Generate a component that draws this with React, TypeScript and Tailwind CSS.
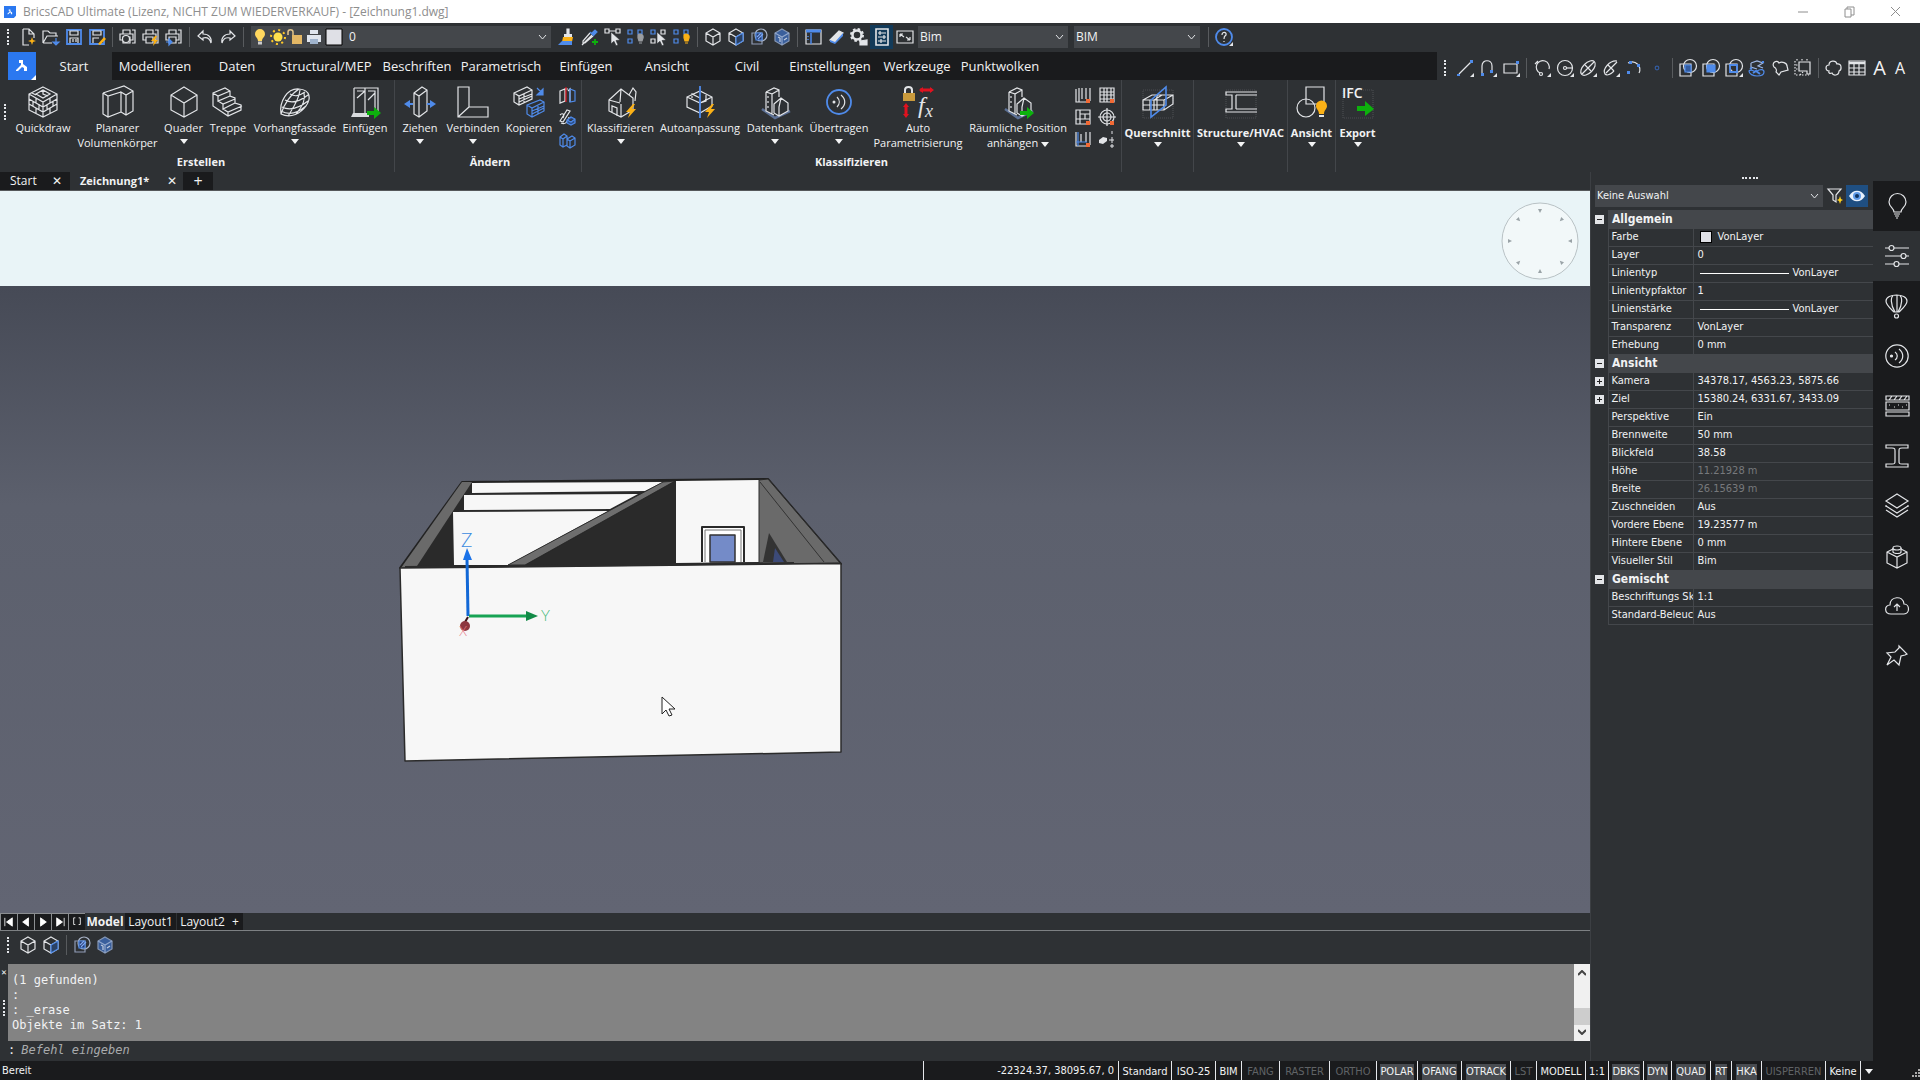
import type { ReactNode } from 'react'
import clsx from 'clsx'

const BLUE = '#4f8bea'
const ORANGE = '#fbb116'
const GREEN = '#0db10d'

/* ---------- icons ---------- */

function Icon({ size = 20, children }: { size?: number; children: ReactNode }) {
  return (
    <svg
      width={size}
      height={size}
      viewBox={`0 0 ${size} ${size}`}
      fill="none"
      stroke="#e3e5e8"
      strokeWidth="1.2"
      aria-hidden="true"
      className="shrink-0 overflow-visible"
    >
      {children}
    </svg>
  )
}

const bolt = <path d="M28 18l-7 8h4l-2 6 8-9h-4l3-5z" fill={ORANGE} stroke="none" />
const greenArrow = <path d="M18 25h7v-4l7 6-7 6v-4h-7z" fill={GREEN} stroke="none" />
const corner = <path d="M19 15v4h-4z" fill="#e3e5e8" stroke="none" />
const cube = <path d="M10 2l7 4v8l-7 4-7-4V6zM3 6l7 4 7-4M10 10v8" />
const printer = (
  <path d="M5 7V3h7v4M5 13H2V7h13v6h-3M5 10h7v6H5zM14 3h3v13h-3" />
)
const nodes = (
  <path d="M2 3h4v4H2zM12 3h4v4h-4zM2 12h4v4H2z" stroke={BLUE} />
)
const cursor = <path d="M8 5l9 8-4 .5 2 4.500-2 .8-2-4.500-3 2.500z" fill="#e3e5e8" stroke="#2e3134" strokeWidth=".6" />

const tools: Record<string, ReactNode> = {
  new: (
    <>
      <path d="M5 2h6l5 5v4M5 2v16h6M11 2v5h5" />
      <path d="M14 10l1 3 3 1-3 1-1 3-1-3-3-1 3-1z" fill={ORANGE} stroke="none" />
    </>
  ),
  open: (
    <>
      <path d="M2 16V4h5l2 2h6v3M2 16l4-7h11M2 16h9" />
      <path d="M15 11v5M12 15l3 3 3-3z" stroke={BLUE} fill={BLUE} />
    </>
  ),
  save: (
    <>
      <path d="M3 3h14v14H3z" stroke={BLUE} strokeWidth="1.800" />
      <path d="M6 4h8v4H6zM6 16v-5h8v5M9 12v3M12 12v3" />
    </>
  ),
  saveAs: (
    <>
      <path d="M3 3h14v14H3z" stroke={BLUE} strokeWidth="1.800" />
      <path d="M6 4h8v4H6zM6 16v-5h6" />
      <path d="M11 17l6-7 2 2-6 6z" fill={ORANGE} stroke="none" />
    </>
  ),
  preview: (
    <>
      {printer}
      <circle cx="8" cy="12" r="3.500" fill="#2e3134" />
    </>
  ),
  plot: (
    <>
      {printer}
      <path d="M14 9l-4 5h3l-1 5 5-6h-3l2-4z" fill={ORANGE} stroke="none" />
    </>
  ),
  publish: (
    <>
      {printer}
      <path d="M2 15h5M5 12l3 3-3 3z" stroke={BLUE} fill={BLUE} />
    </>
  ),
  undo: <path d="M8 4L3 9l5 4v-2c4-1 7 1 8 5 1-5-2-9-8-9z" />,
  redo: <path d="M12 4l5 5-5 4v-2c-4-1-7 1-8 5-1-5 2-9 8-9z" />,
  brush: (
    <>
      <path d="M10 2h2v6h-2z" fill="#e3e5e8" />
      <path d="M7 7h8v3H7z" fill="#e3e5e8" stroke="none" />
      <path d="M6 10h10l-1 5H5z" fill={ORANGE} stroke="none" />
      <path d="M1 18l4-4h10v4z" fill={BLUE} stroke="none" />
    </>
  ),
  dropper: (
    <>
      <path d="M12 8L4 16l-2 2M10 6l-7 8v2h2l8-7" />
      <path d="M10 5l4 4M12 6l3-3 2 2-3 3z" fill={BLUE} stroke={BLUE} />
      <path d="M15 12v6M12 15h6" stroke={GREEN} strokeWidth="1.800" />
    </>
  ),
  pick: (
    <>
      <path d="M2 2h4v4H2zM13 2h4v4h-4zM6 4h7" />
      {cursor}
    </>
  ),
  hide: (
    <>
      {nodes}
      <path d="M12 8a3 3 0 0 1 5 3l-1 3h-3l-1-3zM13 16h3" fill="#9a9da1" stroke="#9a9da1" />
    </>
  ),
  isolate: (
    <>
      <path d="M2 3h4v4H2z" stroke={BLUE} />
      <path d="M12 3h4v4h-4zM2 12h4v4H2z" />
      {cursor}
    </>
  ),
  show: (
    <>
      {nodes}
      <path d="M12 8a3 3 0 0 1 5 3l-1 3h-3l-1-3zM13 16h3" fill={ORANGE} stroke={ORANGE} />
    </>
  ),
  cube,
  cubeBlue: (
    <>
      {cube}
      <path d="M10 10l7-4v8l-7 4z" fill="#2b4265" stroke={BLUE} />
    </>
  ),
  xray: (
    <>
      <path d="M3 6h10v11H3z" stroke="#8f9cb5" />
      <circle cx="12" cy="8" r="6" stroke="#a9b3c6" />
      <path d="M7 6h6v7H7z" fill="#24386a" stroke={BLUE} />
      <path d="M8 10l4-4M9 12l5-5" stroke="#7ea6ee" />
    </>
  ),
  cubeSolid: (
    <>
      <path d="M10 2l7 4v8l-7 4-7-4V6z" fill="#3a5f9c" stroke="#8597b5" />
      <path d="M3 6l7 4 7-4M10 10v8" stroke="#93a8cc" />
      <path d="M6 10l2 1v4M12 13l3-2" stroke="#c2cde0" />
    </>
  ),
  panelLeft: (
    <>
      <path d="M3 3h15v14H3z" />
      <path d="M3 4h15" stroke={BLUE} strokeWidth="3" />
      <path d="M5 9v1M5 12v1M8 6v11" stroke={BLUE} strokeWidth="1.500" />
    </>
  ),
  eraser: (
    <>
      <path d="M4 13l9-9 4 2-8 9z" fill="#e3e5e8" />
      <path d="M4 13l5 2 8-9v3l-8 8-5-2z" fill={BLUE} stroke="none" />
    </>
  ),
  gear: (
    <>
      <circle cx="8" cy="8" r="4.500" strokeWidth="2.500" />
      <circle cx="8" cy="8" r="6" strokeWidth="2" strokeDasharray="2.500 2.200" />
      <path d="M11 14l7-1v5h-7z" fill="#e3e5e8" />
    </>
  ),
  settings: (
    <>
      <path d="M4 2h12v16H4z" strokeWidth="1.600" />
      <path d="M6 6h8M6 10h8M6 14h8M8 4v4M12 8v4M9 12v4" />
    </>
  ),
  expand: (
    <path d="M2 4h16v12H2zM5 7l4 3M5 7h3M5 7v3M15 13l-4-3M15 13h-3M15 13v-3" />
  ),
  help: (
    <>
      <circle cx="10" cy="10" r="8" stroke={BLUE} strokeWidth="1.800" />
      <path d="M8 8c0-4 5-3 4 0-1 1-2 1-2 4M10 14v1" />
      {corner}
    </>
  ),
  line: (
    <>
      <path d="M4 16L16 4" />
      <path d="M2 16h3v2H2zM15 2h3v3h-3z" fill={BLUE} stroke="none" />
      {corner}
    </>
  ),
  polyline: (
    <>
      <path d="M4 17V8c0-7 10-7 10 0v6" />
      <path d="M3 15h3v3H3zM12 12h3v3h-3z" fill={BLUE} stroke="none" />
      {corner}
    </>
  ),
  rect: (
    <>
      <path d="M3 6h13v9H3z" />
      <path d="M15 3h3v3h-3z" fill={BLUE} stroke="none" />
      {corner}
    </>
  ),
  arc: (
    <>
      <path d="M8 15A6.500 6.500 0 1 1 17 11M3 6l3-3" />
      <circle cx="9" cy="16" r="1.500" />
      {corner}
    </>
  ),
  circle: (
    <>
      <circle cx="10" cy="10" r="7.500" />
      <circle cx="10" cy="10" r="1.500" />
      <path d="M11 10h6" />
      {corner}
    </>
  ),
  ellipse: (
    <>
      <ellipse cx="10" cy="10" rx="9" ry="5" transform="rotate(-45 10 10)" />
      <path d="M7 7l6 6M4 16L16 4" />
      {corner}
    </>
  ),
  ellipseArc: (
    <>
      <path d="M16 3C9 2 1 11 4 16c2 2 6 0 9-3M5 15L16 4M7 7l6 6" />
      {corner}
    </>
  ),
  spline: (
    <>
      <path d="M4 5c8-4 14 4 11 10" />
      <path d="M5 3h3v3H5zM13 6h3v3h-3zM3 13h3v3H3z" fill={BLUE} stroke="none" />
    </>
  ),
  point: <circle cx="10" cy="10" r="1.800" stroke="#345c9f" />,
  hatch: (
    <>
      <path d="M2 6h11v12H2z" />
      <circle cx="12" cy="8" r="6.500" />
      <path d="M7 7h6v7H7z" fill="#345c9f" stroke={BLUE} />
    </>
  ),
  gradient: (
    <>
      <path d="M2 6h11v12H2z" />
      <circle cx="12" cy="8" r="6.500" />
      <path d="M6 7h8v7H6z" fill={BLUE} stroke={BLUE} />
    </>
  ),
  boundary: (
    <>
      <path d="M2 6h11v12H2z" />
      <circle cx="12" cy="8" r="6.500" />
      <path d="M6 7h7v7H6z" stroke={BLUE} strokeWidth="1.800" />
      {corner}
    </>
  ),
  region: (
    <>
      <path d="M4 5l6-2 6 2-5 3 5 2M4 5v4l6 2" stroke="#9db6e4" />
      <path d="M2 13c3-3 5 2 8 0s7-2 7 1-3 4-7 4-8-2-8-5z" stroke={BLUE} />
      <path d="M6 15l3-2 4 3M16 3v2M3 10l2 1" stroke={BLUE} strokeWidth="2" />
    </>
  ),
  wipeout: <path d="M4 9C1 5 7 1 9 5c3-2 8 0 8 3l1 4-7 2-2 3-3-3c1-2 0-4-2-5z" />,
  block: (
    <>
      <path d="M6 4h11v12h-3v-3H6z" />
      <path d="M2 3v14h14M3 7h2M3 11h2M7 17l3-3M4 1v3M9 1v2M14 1v2" strokeDasharray="1.500 1.500" />
    </>
  ),
  cloud: <path d="M5 13c-4 0-4-6 0-6 0-5 7-5 8-1 5-1 5 6 2 7 0 5-6 5-7 2-2 1-4 0-3-2z" />,
  table: (
    <>
      <path d="M2 3h16v14H2zM2 10h16M2 14h16M7 6v11M12 6v11" />
      <path d="M2 5h16" strokeWidth="2.500" />
    </>
  ),
}

const house = <path d="M4 14l12-11 12 9v12l-12 7-12-6zM16 3l-1 13M4 14l11 3M16 31V18M7 27v-7l5 2v8" />
const building = (
  <>
    <path d="M3 23l13 9 15-7" stroke="#5c7095" strokeWidth="2.500" />
    <path d="M7 6l8-4 5 2v7M7 6v19l8 4M7 6l6 2v20M13 8l7-4M9 10v2M9 15v2M9 20v2M15 18l7-6 7 5v8l-9 5-5-3zM22 12l-2 9v9" fill="#2e3134" />
  </>
)

const ribbonIcons: Record<string, ReactNode> = {
  quickdraw: (
    <path d="M16 1l14 7v16l-14 7-14-7V8zM2 8l14 8 14-8M16 16v15M9 8l7-4 7 4-7 4zM2 13l14 8 14-8M2 18l14 8 14-8M9 12v5M6 15v5M12 18v5M9 22v5M23 12v5M20 19v4M26 15v5M23 22v5M16 4v4l5 2M5 7l4 2" />
  ),
  planar: <path d="M1 7l5 3 13-4M1 7L22 0l9 5v20l-7 4-5-3V6l5 3 7-4M24 9v20M1 7v21l5 3 13-5M6 10v21" />,
  quader: <path d="M16 1l13 8v15l-13 7-13-7V9zM3 9l13 8 13-8M16 17v14" />,
  treppe: <path d="M1 7l12-5 5 3v5l5 2v5l6 2v5l-13 6L1 20zM1 7l5 3 12-5M6 10v5l12-5M6 15l5 3 12-5M11 18v5l12-6M11 23l5 3 14-6M16 26v4" />,
  dome: (
    <path d="M2 28C0 16 8 2 20 3s12 10 7 17-15 13-25 8zM2 28C5 18 12 8 20 3M9 30C14 22 20 14 21 4M17 28c6-7 10-14 8-21M3 21c8 4 17 1 26-6M6 14c7 4 14 2 23-5M11 8c5 3 9 2 15-2M2 25c9 5 18 1 25-5" />
  ),
  door: (
    <>
      <path d="M5 2h24v26M5 2v26M8 5h8v23M16 2v26M19 5h7v20M8 12l8-7M19 14l7-7" />
      <path d="M4 27h16v4H2z" fill="#d9dbde" stroke="none" />
      {greenArrow}
    </>
  ),
  ziehen: (
    <>
      <path d="M10 7l8-6 5 3v21l-8 6-5-3zM10 7l5 3 8-6M15 10v21" />
      <path d="M9 18H3M23 18h6" stroke={BLUE} strokeWidth="2" />
      <path d="M0 18l6-4v8zM32 18l-6-4v8z" fill={BLUE} stroke="none" />
    </>
  ),
  verbinden: <path d="M1 1h11v20h19v10H1zM1 31l11-10" />,
  kopieren: (
    <>
      <path d="M1 7l13-6 5 3v9L6 19l-5-3zM1 7l5 3 13-6M6 10v9M6 13l13-5M11 8v9M6 16l13-6" />
      <path d="M14 19l13-5 4 2v9l-12 6-5-3zM14 19l5 3 12-6M19 22v9M19 25l12-5M25 20v8M19 28l12-6" stroke={BLUE} />
      <path d="M24 2l6 6M30 3v6h-6z" stroke={BLUE} fill={BLUE} />
    </>
  ),
  klassifizieren: (
    <>
      {house}
      <path d="M24 9l4-7 3 4-1 9" />
      {bolt}
    </>
  ),
  anpassung: (
    <>
      <path d="M3 11l13-6 12 6v9l-12 7-13-6zM3 11l13 6 12-6M16 17v10M8 12V8l8 4M22 9v6l-6 2" />
      <path d="M16 0v32" stroke={BLUE} strokeWidth="1.800" />
      {bolt}
    </>
  ),
  datenbank: building,
  uebertragen: (
    <>
      <circle cx="16" cy="16" r="12" stroke={BLUE} strokeWidth="1.800" />
      <circle cx="11" cy="16" r="1.500" fill="#e3e5e8" stroke="none" />
      <path d="M14 11c3 3 3 7 0 10M18 9c5 4 5 10 0 14" />
    </>
  ),
  auto: (
    <>
      <path d="M3 8V4c0-4 7-4 7 0v4" strokeWidth="2" />
      <path d="M1 7h12v8H1z" fill="#c99a3c" stroke="none" />
      <path d="M4 20v9M18 4h12" stroke="#e0121f" strokeWidth="3" />
      <path d="M1 21l3-4 3 4zM1 28l3 4 3-4zM21 1l-4 3 4 3zM28 1l4 3-4 3z" fill="#e0121f" stroke="none" />
      <text x="16" y="27" fill="#e3e5e8" stroke="none" className="font-['Liberation_Serif'] text-[24px] italic">f</text>
      <text x="23" y="31" fill="#e3e5e8" stroke="none" className="font-['Liberation_Serif'] text-[18px] italic">x</text>
    </>
  ),
  position: (
    <>
      {building}
      {greenArrow}
    </>
  ),
  querschnitt: (
    <>
      <path d="M1 4h30v28H1z" stroke="#4a4d50" strokeDasharray="1 1" />
      <path d="M1 14l9-5h21v9l-9 6H1zM1 14h21v10M22 14l9-5M1 19h21M8 14v10M15 9v15M12 24V14l8-5" />
      <path d="M9 14L24 1v18L9 31z" stroke={BLUE} strokeWidth="1.600" />
    </>
  ),
  structure: (
    <>
      <path d="M1 4h30v28H1z" stroke="#4a4d50" strokeDasharray="1 1" />
      <path d="M32 6H1v3h6v14H1v3h31M11 9v14M11 9h21M11 23h21" />
    </>
  ),
  ansicht: (
    <>
      <path d="M10 1h18v17H10z" />
      <circle cx="10" cy="22" r="9" />
      <path d="M20 20a5.500 5.500 0 1 1 11 0c0 3-3 4-3 8h-5c0-4-3-5-3-8z" fill={ORANGE} stroke="none" />
      <path d="M23 30h5" strokeWidth="2" />
    </>
  ),
  export: (
    <>
      <path d="M1 4h30v28H1z" stroke="#4a4d50" strokeDasharray="1 1" />
      <text x="0" y="12" fill="#f1f2f3" stroke="none" className="font-['Open_Sans'] text-[14px] font-semibold">IFC</text>
      <path d="M15 20h8v-5l9 8-9 7v-5h-8z" fill={GREEN} stroke="none" />
    </>
  ),
}

const orangeDot = <path d="M12 13h4v4h-4z" fill="#f26a35" stroke="none" />
const smallIcons: Record<string, ReactNode> = {
  split: (
    <>
      <path d="M2 5l5-2v12l-5 2zM7 3h3M10 5l2-2v13" />
      <path d="M8 1v15" stroke="#e0121f" />
      <path d="M12 3l5 2v10l-5 1z" stroke={BLUE} />
    </>
  ),
  sketch: (
    <>
      <path d="M2 13L9 2l3 1-7 11zM2 7c3-3 5 0 3 3M3 15c4 2 7-1 8-6" />
      <path d="M9 12l4-3 4 2v4l-4 2-4-2zM9 12l4 2 4-3" stroke={BLUE} fill="#2b4f8c" />
    </>
  ),
  boxes: <path d="M2 7l4-3 3 2v9l-4 2-3-2zM2 7l3 2v8M5 9l4-3M9 9l5-3 3 2v7l-5 3-3-2zM9 9l3 2v7M12 11l5-3" stroke={BLUE} />,
  column: (
    <>
      <path d="M2 3v13h12M5 2v14M8 2v11M12 2v11M16 2v13" />
      {orangeDot}
    </>
  ),
  grid: (
    <>
      <path d="M2 2h14v14H2zM2 6h14M2 9h14M2 13h14M6 2v14M9 2v14M13 2v14" />
      {orangeDot}
    </>
  ),
  plan: (
    <>
      <path d="M2 2h14v14H2zM6 2v14M6 6h10M11 6v5H2M11 11h5" />
      {orangeDot}
    </>
  ),
  wheel: (
    <>
      <circle cx="9" cy="9" r="7" />
      <circle cx="9" cy="9" r="4" />
      <path d="M9 0v18M0 9h18" />
      {orangeDot}
    </>
  ),
  axes: (
    <>
      <path d="M2 2v14h12M7 4v8M12 2v10M16 2v13" />
      <path d="M2 12h11M4 2v14" stroke={BLUE} />
      {orangeDot}
    </>
  ),
  part: (
    <>
      <path d="M1 10l4-3 4 1v3l-4 3-4-1z" fill="#e3e5e8" stroke="none" />
      <path d="M11 10h5M14 7v6M14 1v3M13 15h2v2h-2z" strokeWidth="1" />
    </>
  ),
}

const sidebarIcons: { name: string; icon: ReactNode }[] = [
  { name: 'Tipps', icon: <path d="M9 18c0-4-5-5-5-10a8.500 8.500 0 0 1 17 0c0 5-5 6-5 10zM9 20h6M10 22h4M11 24h2" /> },
  {
    name: 'Eigenschaften',
    icon: (
      <>
        <path d="M0 4h4M9 4h15M0 12h16M21 12h3M0 20h9M14 20h10" />
        <circle cx="6.500" cy="4" r="2.500" />
        <circle cx="18.500" cy="12" r="2.500" />
        <circle cx="11.500" cy="20" r="2.500" />
      </>
    ),
  },
  {
    name: 'Inhalt',
    icon: (
      <>
        <path d="M9 18C5 14 1 11 1 7c0-8 21-8 21 0 0 4-4 7-8 11zM10 18C5 10 6 3 8 2M13 18c5-8 4-15 2-16M12 18V1" />
        <circle cx="11.500" cy="22" r="2" />
      </>
    ),
  },
  {
    name: 'Übertragen',
    icon: (
      <>
        <circle cx="12" cy="12" r="11.200" />
        <circle cx="6.500" cy="12" r="1" fill="#e3e5e8" />
        <path d="M10 8c3 2 3 6 0 8M14 5c5 4 5 10 0 14" />
      </>
    ),
  },
  {
    name: 'Aufbauten',
    icon: <path d="M1 2h23v4H1zM1 8h23v8H1zM1 18h23v4H1zM4 6l3-4M9 6l3-4M14 6l3-4M19 6l3-4M4 11h1M9 13h1M13 11h1M17 13h1M21 11h1" />,
  },
  { name: 'Profile', icon: <path d="M1 1h22v3h-6c-3 0-3 1-3 3v10c0 2 0 3 3 3h6v3H1v-3h6c3 0 3-1 3-3V7c0-2 0-3-3-3H1z" /> },
  { name: 'Layer', icon: <path d="M12 0l11 7-11 7L1 7zM1 12l11 7 11-7M1 16l11 7 11-7M1 11v2M23 11v2" /> },
  {
    name: 'Komponenten',
    icon: (
      <>
        <path d="M12 3l10 5v11l-10 5-10-5V8zM2 8l10 5 10-5M12 13v11" />
        <path d="M8 4v4c1 2 8 2 8 0V4" fill="#1a1b1d" />
        <ellipse cx="12" cy="4" rx="4" ry="2" fill="#1a1b1d" />
      </>
    ),
  },
  { name: 'Cloud', icon: <path d="M6 20c-7 0-7-9-1-9 0-9 13-10 14-1 6 0 6 10 0 10zM12 17v-7M9 13l3-3 3 3" /> },
  { name: 'Anheften', icon: <path d="M14 2l8 8-2 1-4 1-2 9-5-5-7 5 4-8-4-4 8-1 4-4z" /> },
]

function Chevron() {
  return (
    <svg width="9" height="6" viewBox="0 0 9 6" fill="none" stroke="#e3e5e8" aria-hidden="true" className="pointer-events-none -ml-4 mr-1 shrink-0">
      <path d="M1 1l3.500 4L8 1" />
    </svg>
  )
}

function Caret({ className }: { className?: string }) {
  return (
    <svg width="8" height="5" viewBox="0 0 8 5" aria-hidden="true" className={clsx('inline-block', className)}>
      <path d="M0 0h8L4 5z" fill="#f3f4f5" />
    </svg>
  )
}

function Logo({ className }: { className: string }) {
  return (
    <svg viewBox="0 0 28 28" aria-hidden="true" className={className}>
      <path d="M0 0h28v28H0z" fill="#2b78f0" />
      <path d="M11 8h4v4l4 3v4h-3v-3l-2-1-4 4H8v-1l5-5v-2h-2z" fill="#fff" />
      <path d="M28 23v5h-5z" fill="#fff" />
    </svg>
  )
}

/* ---------- toolbar parts ---------- */

function Grip() {
  return (
    <div className="flex w-4 shrink-0 justify-center">
      <div className="h-4 border-l-2 border-dotted border-gray-200" />
    </div>
  )
}

function Separator() {
  return (
    <div className="flex w-2 shrink-0 justify-center">
      <div className="h-5 w-px bg-[#585b5e]" />
    </div>
  )
}

function Tools({ names, active }: { names: string[]; active?: string }) {
  return names.map(name => (
    <button
      key={name}
      type="button"
      aria-label={name}
      className={clsx('flex h-6 w-[23px] shrink-0 items-center justify-center', name === active && 'bg-[#123a59]')}
    >
      <Icon>{tools[name]}</Icon>
    </button>
  ))
}

function Select({ label, value, className }: { label: string; value: string; className: string }) {
  return (
    <div className={clsx('flex h-[22px] items-center bg-[#44474b]', className)}>
      <select aria-label={label} defaultValue={value} className="h-full min-w-0 flex-1 appearance-none bg-transparent px-0.5 outline-none">
        <option>{value}</option>
      </select>
      <Chevron />
    </div>
  )
}

function QuickToolbar() {
  return (
    <div className="flex h-[29px] items-center pb-px text-xs">
      <Grip />
      <Tools names={['new', 'open', 'save', 'saveAs']} />
      <Separator />
      <Tools names={['preview', 'plot', 'publish']} />
      <Separator />
      <Tools names={['undo', 'redo']} />
      <Separator />
      <div className="mx-1 flex h-[22px] w-[300px] items-center bg-[#44474b]">
        <svg width="92" height="20" viewBox="0 0 92 20" fill="none" aria-hidden="true" className="shrink-0">
          <path d="M4 7a5 5 0 1 1 10 0c0 3-3 4-3 7H7c0-3-3-4-3-7z" fill="#ffd75e" />
          <path d="M7 16h4" stroke="#ccc" strokeWidth="3" />
          <circle cx="27" cy="10" r="4.500" fill="#ffe14d" />
          <circle cx="27" cy="10" r="7" stroke="#ffc928" strokeWidth="2" strokeDasharray="2 3.500" />
          <path d="M37 8V5c0-3 5-3 5 0v4" stroke="#e3c58a" strokeWidth="1.500" />
          <path d="M41 8h10v9H41z" fill="#e3b765" />
          <path d="M56 8h14v7H56zM59 3h8v4h-8z" fill="#dfe5ee" />
          <path d="M59 12h8v5h-8z" fill="#9fb3cd" />
          <path d="M75 2h16v16H75z" fill="#dfe0e6" stroke="#000" />
        </svg>
        <select aria-label="Layer" defaultValue="0" className="h-full min-w-0 flex-1 appearance-none bg-transparent px-1.5 outline-none">
          <option>0</option>
        </select>
        <Chevron />
      </div>
      <Tools names={['brush', 'dropper', 'pick', 'hide', 'isolate', 'show']} />
      <Separator />
      <Tools names={['cube', 'cubeBlue', 'xray', 'cubeSolid']} />
      <Separator />
      <Tools names={['panelLeft', 'eraser', 'gear', 'settings', 'expand']} active="settings" />
      <Select label="Visueller Stil" value="Bim" className="ml-0.5 w-[150px]" />
      <Select label="Arbeitsbereich" value="BIM" className="mr-1 ml-1.5 w-[126px]" />
      <Separator />
      <Tools names={['help']} />
    </div>
  )
}

const tabs = [
  { label: 'Start', width: 'w-[76px]' },
  { label: 'Modellieren', width: 'w-[86px]' },
  { label: 'Daten', width: 'w-[78px]' },
  { label: 'Structural/MEP', width: 'w-[100px]' },
  { label: 'Beschriften', width: 'w-[82px]' },
  { label: 'Parametrisch', width: 'w-[86px]' },
  { label: 'Einfügen', width: 'w-[84px]' },
  { label: 'Ansicht', width: 'w-[78px]' },
  { label: 'Civil', width: 'w-[82px]' },
  { label: 'Einstellungen', width: 'w-[84px]' },
  { label: 'Werkzeuge', width: 'w-[90px]' },
  { label: 'Punktwolken', width: 'w-[76px]' },
]

function TabRow() {
  return (
    <div className="flex h-7 items-stretch">
      <button type="button" aria-label="BricsCAD" className="ml-2 w-7">
        <Logo className="size-7" />
      </button>
      <div className="flex flex-1 bg-[#1a1b1d]">
        {tabs.map((tab, i) => (
          <button
            key={tab.label}
            type="button"
            className={clsx(
              'flex shrink-0 items-center justify-center pt-0.5 text-[13px] whitespace-nowrap',
              tab.width,
              i === 0 && 'bg-[#2e3134]',
            )}
          >
            {tab.label}
          </button>
        ))}
      </div>
      <div className="flex w-[483px] items-center pt-1">
        <Grip />
        <Tools names={['line', 'polyline', 'rect']} />
        <Separator />
        <Tools names={['arc', 'circle', 'ellipse', 'ellipseArc', 'spline', 'point']} />
        <Separator />
        <Tools names={['hatch', 'gradient', 'boundary', 'region', 'wipeout', 'block']} />
        <Separator />
        <Tools names={['cloud', 'table']} />
        <button type="button" className="w-[23px] text-xl leading-6">A</button>
        <button type="button" className="w-[18px] text-base leading-5">A</button>
      </div>
    </div>
  )
}

type RibbonItem = { icon: string; lines: string[]; width: string; caret?: boolean; inlineCaret?: boolean }

const createItems: RibbonItem[] = [
  { icon: 'quickdraw', lines: ['Quickdraw'], width: 'w-[62px]' },
  { icon: 'planar', lines: ['Planarer', 'Volumenkörper'], width: 'w-[87px]' },
  { icon: 'quader', lines: ['Quader'], width: 'w-[45px]', caret: true },
  { icon: 'treppe', lines: ['Treppe'], width: 'w-11' },
  { icon: 'dome', lines: ['Vorhangfassade'], width: 'w-[90px]', caret: true },
  { icon: 'door', lines: ['Einfügen'], width: 'w-[50px]' },
]

const modifyItems: RibbonItem[] = [
  { icon: 'ziehen', lines: ['Ziehen'], width: 'w-[42px]', caret: true },
  { icon: 'verbinden', lines: ['Verbinden'], width: 'w-16', caret: true },
  { icon: 'kopieren', lines: ['Kopieren'], width: 'w-12' },
]

const classifyItems: RibbonItem[] = [
  { icon: 'klassifizieren', lines: ['Klassifizieren'], width: 'w-[77px]', caret: true },
  { icon: 'anpassung', lines: ['Autoanpassung'], width: 'w-[82px]' },
  { icon: 'datenbank', lines: ['Datenbank'], width: 'w-[68px]', caret: true },
  { icon: 'uebertragen', lines: ['Übertragen'], width: 'w-[60px]', caret: true },
  { icon: 'auto', lines: ['Auto', 'Parametrisierung'], width: 'w-[98px]' },
  { icon: 'position', lines: ['Räumliche Position', 'anhängen'], width: 'w-[102px]', inlineCaret: true },
]

const collapsedPanels = [
  { icon: 'querschnitt', label: 'Querschnitt', width: 'w-[71px]' },
  { icon: 'structure', label: 'Structure/HVAC', width: 'w-[93px]' },
  { icon: 'ansicht', label: 'Ansicht', width: 'w-[47px]' },
  { icon: 'export', label: 'Export', width: 'w-[43px]' },
]

function RibbonPanel({ title, items, small, className }: { title: string; items: RibbonItem[]; small?: string[]; className?: string }) {
  return (
    <section className={clsx('flex flex-col border-r border-[#43464a]', className)}>
      <div className="flex h-[74px] items-start pt-1.5">
        {items.map(item => (
          <button key={item.icon} type="button" className={clsx('flex flex-col items-center text-[11px] leading-[15px] whitespace-nowrap', item.width)}>
            <Icon size={32}>{ribbonIcons[item.icon]}</Icon>
            <span className="mt-0.5">{item.lines[0]}</span>
            {item.lines[1] && (
              <span>
                {item.lines[1]} {item.inlineCaret && <Caret />}
              </span>
            )}
            {item.caret && <Caret className="mt-1" />}
          </button>
        ))}
        {small && (
          <div className={clsx('-mt-0.5 grid auto-rows-[22px] px-0.5', small.length > 3 && 'grid-cols-2')}>
            {small.map(name => (
              <button key={name} type="button" aria-label={name} className="flex w-6 items-center justify-center">
                <Icon size={18}>{smallIcons[name]}</Icon>
              </button>
            ))}
          </div>
        )}
      </div>
      <h2 className="text-center text-[11px] leading-4 font-bold">{title}</h2>
    </section>
  )
}

function Ribbon() {
  return (
    <div className="flex h-[92px]">
      <div className="mt-6 w-3 pl-1">
        <div className="h-4 border-l-2 border-dotted border-gray-200" />
      </div>
      <RibbonPanel title="Erstellen" items={createItems} className="pr-1" />
      <RibbonPanel title="Ändern" items={modifyItems} small={['split', 'sketch', 'boxes']} className="pl-1" />
      <RibbonPanel
        title="Klassifizieren"
        items={classifyItems}
        small={['column', 'grid', 'plan', 'wheel', 'axes', 'part']}
      />
      {collapsedPanels.map(panel => (
        <section key={panel.icon} className="border-r border-[#43464a] last:border-0">
          <button
            type="button"
            className={clsx('flex flex-col items-center pt-1.5 text-[11px] leading-[15px] font-bold whitespace-nowrap', panel.width)}
          >
            <Icon size={32}>{ribbonIcons[panel.icon]}</Icon>
            <span className="mt-[7px]">{panel.label}</span>
            <Caret className="mt-0.5" />
          </button>
        </section>
      ))}
    </div>
  )
}

/* ---------- drawing area ---------- */

function DocumentTabs() {
  return (
    <div className="flex h-[19px] items-center border-b border-[#55585b] text-xs">
      <div className="flex h-full w-[70px] items-center justify-between bg-[#1a1b1d] pr-2 pl-2.5">
        <button type="button">Start</button>
        <button type="button" aria-label="Start schließen">✕</button>
      </div>
      <div className="flex h-full w-[113px] items-center justify-between pr-1.5 pl-2.5">
        <button type="button" className="text-[11px] font-bold">Zeichnung1*</button>
        <button type="button" aria-label="Zeichnung1 schließen">✕</button>
      </div>
      <button type="button" className="h-full w-[30px] bg-[#1a1b1d] text-base leading-4">+</button>
    </div>
  )
}

function Model() {
  return (
    <svg aria-hidden="true" className="absolute inset-0 size-full" strokeLinejoin="round">
      <g transform="translate(0 -191)">
        <path d="M462 482l306-3 73 85-441 4z" fill="#2a2a2a" stroke="#222" strokeWidth="2" />
        <path d="M462 482h10l-55 84-16 2z" fill="#6a6a6a" />
        <path d="M472 483l191-1-18 9-173 2zM464 495l174-1-28 15-146 1zM453 512l155-1-100 54h-54z" fill="#f7f7f7" />
        <path d="M663 482l12-1-150 84h-17z" fill="#6e6e6e" stroke="#222" strokeWidth=".8" />
        <path d="M676 481l83-1v82l-83 1z" fill="#f7f7f7" />
        <path d="M702 562v-35h42v35" fill="#fff" stroke="#2a2a2a" strokeWidth="2" />
        <path d="M705 562v-32h36v32" fill="none" stroke="#777" strokeWidth="1" />
        <path d="M710 562v-27h25v27z" fill="#748bc8" stroke="#333" strokeWidth="1.500" />
        <path d="M759 480l9-1 72 84-81 1z" fill="#6a6a6a" stroke="#2a2a2a" strokeWidth="1" />
        <path d="M760 482l64 80" stroke="#333" strokeWidth="1" />
        <path d="M769 533l18 29h-24z" fill="#333" />
        <path d="M775 548l9 14h-11z" fill="#3c4a78" />
        <path d="M400 568l441-4.500V752l-436 9z" fill="#f7f7f7" stroke="#2b2b2b" strokeWidth="1.500" />
        <path d="M405 567l225-2 164-2" stroke="#2b2b2b" strokeWidth="2" />

        <path d="M468 616l-1-57" stroke="#1268d6" strokeWidth="3" />
        <path d="M467 548l5 12h-9z" fill="#1a72e8" />
        <path d="M469 616h58" stroke="#17a354" strokeWidth="3" />
        <path d="M526 611l12 5-12 5z" fill="#118a46" />
        <path d="M468 617l-3 5" stroke="#3a1216" strokeWidth="2" />
        <circle cx="465" cy="626" r="5" fill="#8d3840" />
        <text x="461" y="547" fill="#3b8ae0" className="font-['Lato'] text-[19px] font-light">Z</text>
        <text x="541" y="621" fill="#3fb878" className="font-['Lato'] text-[15px] font-light">Y</text>
        <text x="459" y="636" fill="#e8808a" className="font-['Lato'] text-[13px] font-light">X</text>
        <path d="M662 697v17l4-4 3 6 3-1-3-6h6z" fill="#fff" stroke="#222" />
      </g>
    </svg>
  )
}

function Compass() {
  return (
    <svg width="78" height="78" viewBox="-39 -39 78 78" aria-hidden="true" className="absolute top-[11px] right-[11px]">
      <circle r="38" fill="#f2f8f9" stroke="#b9c2c5" />
      {[0, 45, 90, 135, 180, 225, 270, 315].map(angle => (
        <path key={angle} d="M-2-32h4l-2 4z" fill="#9aa3a7" transform={`rotate(${angle})`} />
      ))}
    </svg>
  )
}

function Viewport() {
  return (
    <div className="relative flex min-h-0 flex-1 flex-col">
      <div className="h-[95px] bg-[#e9f4f7]" />
      <div className="flex-1 bg-linear-to-b from-[#464a56] via-[#5c606d] via-35% to-[#626573]" />
      <Model />
      <Compass />
    </div>
  )
}

const navPaths = ['M1 1v10M10 1v10L3 6z', 'M9 1v10L2 6z', 'M3 1v10l7-5z', 'M2 1v10l7-5zM11 1v10', 'M4 1H2v8h2M8 1h2v8H8']

function LayoutTabs() {
  return (
    <div className="flex h-[18px] items-stretch border-b border-[#7d8083] text-xs">
      {navPaths.map((d, i) => (
        <button key={d} type="button" aria-label={`Layout ${i + 1}`} className="flex w-[17px] items-center justify-center border-t border-l border-[#8b8e91] bg-[#1a1b1d]">
          <svg width="10" height="10" viewBox="0 0 12 12" fill={i === 4 ? 'none' : '#fff'} stroke="#fff" aria-hidden="true">
            <path d={d} />
          </svg>
        </button>
      ))}
      <button type="button" className="w-10 font-bold">Model</button>
      <button type="button" className="w-[51px] bg-[#1a1b1d]">Layout1</button>
      <button type="button" className="ml-px w-[51px] bg-[#1a1b1d]">Layout2</button>
      <button type="button" className="w-[15px] bg-[#1a1b1d]">+</button>
    </div>
  )
}

function CommandLine() {
  return (
    <div className="mt-1 font-['DejaVu_Sans_Mono',monospace] text-xs">
      <div className="flex h-[77px]">
        <div className="flex w-2 flex-col items-center gap-5">
          <button type="button" aria-label="Schließen" className="text-[9px] leading-4">✕</button>
          <div className="h-4 border-l-2 border-dotted border-gray-200" />
        </div>
        <pre className="flex-1 bg-[#838383] px-1 pt-[9px] font-[inherit] leading-[15px]">
          {'(1 gefunden)\n:\n: _erase\nObjekte im Satz: 1'}
        </pre>
        <div className="flex w-4 flex-col items-center justify-between bg-[#f0f0f0] py-1.5">
          <svg width="8" height="6" viewBox="0 0 8 6" fill="none" stroke="#444" strokeWidth="2" aria-hidden="true">
            <path d="M0 5l4-4 4 4" />
          </svg>
          <div className="mt-7 h-[17px] w-4 bg-[#cdcdcd]" />
          <svg width="8" height="6" viewBox="0 0 8 6" fill="none" stroke="#444" strokeWidth="2" aria-hidden="true">
            <path d="M0 1l4 4 4-4" />
          </svg>
        </div>
      </div>
      <label className="flex h-5 items-center gap-1.5 pb-0.5 pl-2">
        :
        <input type="text" aria-label="Befehl" placeholder="Befehl eingeben" className="flex-1 bg-transparent italic outline-none placeholder:text-[#a9abad]" />
      </label>
    </div>
  )
}

/* ---------- properties ---------- */

type Row = { label: string; value: string; kind?: 'swatch' | 'line' | 'disabled' | 'expand' }

const groups: { title: string; rows: Row[] }[] = [
  {
    title: 'Allgemein',
    rows: [
      { label: 'Farbe', value: 'VonLayer', kind: 'swatch' },
      { label: 'Layer', value: '0' },
      { label: 'Linientyp', value: 'VonLayer', kind: 'line' },
      { label: 'Linientypfaktor', value: '1' },
      { label: 'Linienstärke', value: 'VonLayer', kind: 'line' },
      { label: 'Transparenz', value: 'VonLayer' },
      { label: 'Erhebung', value: '0 mm' },
    ],
  },
  {
    title: 'Ansicht',
    rows: [
      { label: 'Kamera', value: '34378.17, 4563.23, 5875.66', kind: 'expand' },
      { label: 'Ziel', value: '15380.24, 6331.67, 3433.09', kind: 'expand' },
      { label: 'Perspektive', value: 'Ein' },
      { label: 'Brennweite', value: '50 mm' },
      { label: 'Blickfeld', value: '38.58' },
      { label: 'Höhe', value: '11.21928 m', kind: 'disabled' },
      { label: 'Breite', value: '26.15639 m', kind: 'disabled' },
      { label: 'Zuschneiden', value: 'Aus' },
      { label: 'Vordere Ebene', value: '19.23577 m' },
      { label: 'Hintere Ebene', value: '0 mm' },
      { label: 'Visueller Stil', value: 'Bim' },
    ],
  },
  {
    title: 'Gemischt',
    rows: [
      { label: 'Beschriftungs Sk', value: '1:1' },
      { label: 'Standard-Beleuc', value: 'Aus' },
    ],
  },
]

function Toggle({ open, label }: { open: boolean; label: string }) {
  return (
    <button type="button" aria-label={label} className="block size-[9px] bg-[#e3e5e8]">
      <svg viewBox="0 0 9 9" stroke="#222" aria-hidden="true">
        <path d={open ? 'M2 4.500h5' : 'M2 4.500h5M4.500 2v5'} />
      </svg>
    </button>
  )
}

function PropertiesPanel() {
  return (
    <aside className="w-[283px] shrink-0 border-l border-[#3c3f43] font-['DejaVu_Sans_Condensed','DejaVu_Sans',sans-serif] text-[11px]">
      <div className="flex h-3 items-center justify-center pl-9">
        <div className="w-4 border-t-2 border-dotted border-gray-200" />
      </div>
      <div className="flex h-6 items-center pl-1">
        <Select label="Auswahl" value="Keine Auswahl" className="w-[228px]" />
        <button type="button" aria-label="Schnellauswahl" className="flex w-[23px] justify-center">
          <Icon size={18}>
            <path d="M2 2h13l-5 6v7l-3-2V8z" />
            <path d="M14 9l1 3 2 1-2 1-1 3-1-3-2-1 2-1z" fill="#ffd21f" stroke="none" />
          </Icon>
        </button>
        <button type="button" aria-label="Vorschau" className="flex h-[22px] w-[22px] items-center justify-center bg-[#1f4f82]">
          <svg width="16" height="12" viewBox="0 0 16 12" aria-hidden="true">
            <path d="M0 6c4-7 12-7 16 0-4 7-12 7-16 0z" fill="#e8f1fc" />
            <circle cx="8" cy="6" r="4" fill="#5f9be8" />
            <circle cx="8" cy="6" r="2" fill="#10335f" />
          </svg>
        </button>
      </div>
      <table className="mt-0.5 w-full table-fixed border-collapse text-left leading-4">
        <colgroup>
          <col className="w-[17px]" />
          <col className="w-[85px]" />
          <col />
        </colgroup>
        {groups.map(group => (
          <tbody key={group.title}>
            <tr className="h-[18px]">
              <td className="p-0 pl-1">
                <Toggle open label={group.title} />
              </td>
              <th colSpan={2} scope="rowgroup" className="bg-[#44474b] p-0 pl-1 text-xs leading-4">{group.title}</th>
            </tr>
            {group.rows.map(row => (
              <tr key={row.label} className="h-[18px]">
                <td className="p-0 pl-1">{row.kind === 'expand' && <Toggle open={false} label={row.label} />}</td>
                <th scope="row" className="overflow-hidden border border-[#44474b] p-0 pl-[3px] font-normal whitespace-nowrap">{row.label}</th>
                <td className={clsx('border-y border-[#44474b] p-0 pl-1 whitespace-nowrap', row.kind === 'disabled' && 'text-[#77797c]')}>
                  {row.kind === 'swatch' && <span className="mr-1.5 ml-0.5 inline-block size-3 border border-black bg-[#dfe0e6] align-middle" />}
                  {row.kind === 'line' && <span className="mr-1 ml-0.5 inline-block w-[89px] border-t border-white align-middle" />}
                  {row.value}
                </td>
              </tr>
            ))}
          </tbody>
        ))}
      </table>
    </aside>
  )
}

function Sidebar() {
  return (
    <nav className="mt-[9px] flex w-[47px] shrink-0 flex-col bg-[#1a1b1d]">
      {sidebarIcons.map(({ name, icon }) => (
        <button
          key={name}
          type="button"
          aria-label={name}
          className={clsx('flex h-[50px] items-center justify-center', name === 'Eigenschaften' && 'bg-[#2e3134]')}
        >
          <Icon size={24}>{icon}</Icon>
        </button>
      ))}
    </nav>
  )
}

/* ---------- status bar ---------- */

const statusItems: { label: string; width: string; state?: 'on' | 'off' }[] = [
  { label: 'Standard', width: 'w-[53px]' },
  { label: 'ISO-25', width: 'w-[44px]' },
  { label: 'BIM', width: 'w-[26px]' },
  { label: 'FANG', width: 'w-[38px]', state: 'off' },
  { label: 'RASTER', width: 'w-[50px]', state: 'off' },
  { label: 'ORTHO', width: 'w-[47px]', state: 'off' },
  { label: 'POLAR', width: 'w-[41px]', state: 'on' },
  { label: 'OFANG', width: 'w-[44px]', state: 'on' },
  { label: 'OTRACK', width: 'w-[49px]', state: 'on' },
  { label: 'LST', width: 'w-[26px]', state: 'off' },
  { label: 'MODELL', width: 'w-[49px]' },
  { label: '1:1', width: 'w-[23px]' },
  { label: 'DBKS', width: 'w-[35px]', state: 'on' },
  { label: 'DYN', width: 'w-[28px]', state: 'on' },
  { label: 'QUAD', width: 'w-[39px]', state: 'on' },
  { label: 'RT', width: 'w-[21px]', state: 'on' },
  { label: 'HKA', width: 'w-[30px]', state: 'on' },
  { label: 'UISPERREN', width: 'w-[64px]', state: 'off' },
  { label: 'Keine', width: 'w-[35px]' },
]

function StatusBar() {
  return (
    <footer className="flex h-[19px] items-stretch bg-[#1a1b1d] font-['DejaVu_Sans_Condensed','DejaVu_Sans',sans-serif] text-[11px] leading-5">
      <span className="flex-1 border-r border-gray-200 pl-0.5">Bereit</span>
      <span className="w-[194px] pr-1 text-right">-22324.37, 38095.67, 0</span>
      {statusItems.map(item => (
        <button
          key={item.label}
          type="button"
          className={clsx(
            'flex items-center justify-center border-l border-gray-200 pt-0.5 whitespace-nowrap',
            item.width,
            item.state === 'off' && 'text-[#606366]',
          )}
        >
          <span className={clsx('leading-4', item.state === 'on' && 'bg-[#484b50]')}>{item.label}</span>
        </button>
      ))}
      <button type="button" aria-label="Menü" className="flex w-[60px] items-center border-l border-gray-200 pt-0.5 pl-1">
        <Caret />
        <svg width="9" height="9" viewBox="0 0 9 9" fill="#aaa" aria-hidden="true" className="mt-1 ml-auto">
          <path d="M7 0h2v2H7zM7 3h2v2H7zM7 6h2v2H7zM4 3h2v2H4zM4 6h2v2H4zM1 6h2v2H1z" />
        </svg>
      </button>
    </footer>
  )
}

export default function App() {
  return (
    <div className="flex h-screen flex-col overflow-hidden bg-[#2e3134] font-['Open_Sans','Noto_Sans',sans-serif] text-[#f1f2f3]">
      <header className="flex h-[23px] items-center bg-white pl-1 text-xs text-[#8e8e8e]">
        <Logo className="size-3" />
        <h1 className="ml-[7px] flex-1">BricsCAD Ultimate (Lizenz, NICHT ZUM WIEDERVERKAUF) - [Zeichnung1.dwg]</h1>
        {['M0 6h10', 'M1 3h6v8H1zM3 3V1h7v8H7', 'M1 1l9 9M10 1l-9 9'].map((d, i) => (
          <button key={d} type="button" aria-label={['Minimieren', 'Wiederherstellen', 'Schließen'][i]} className="flex w-[46px] justify-center">
            <svg width="11" height="12" viewBox="0 0 11 12" fill="none" stroke="#8e8e8e" aria-hidden="true">
              <path d={d} />
            </svg>
          </button>
        ))}
        <div className="w-0.5" />
      </header>
      <QuickToolbar />
      <TabRow />
      <Ribbon />
      <div className="flex min-h-0 flex-1">
        <main className="flex min-w-0 flex-1 flex-col">
          <DocumentTabs />
          <Viewport />
          <LayoutTabs />
          <div className="flex h-[29px] items-center pb-0.5">
            <Grip />
            <Tools names={['cube', 'cubeBlue']} />
            <Separator />
            <Tools names={['xray', 'cubeSolid']} />
          </div>
          <CommandLine />
        </main>
        <PropertiesPanel />
        <Sidebar />
      </div>
      <StatusBar />
    </div>
  )
}
